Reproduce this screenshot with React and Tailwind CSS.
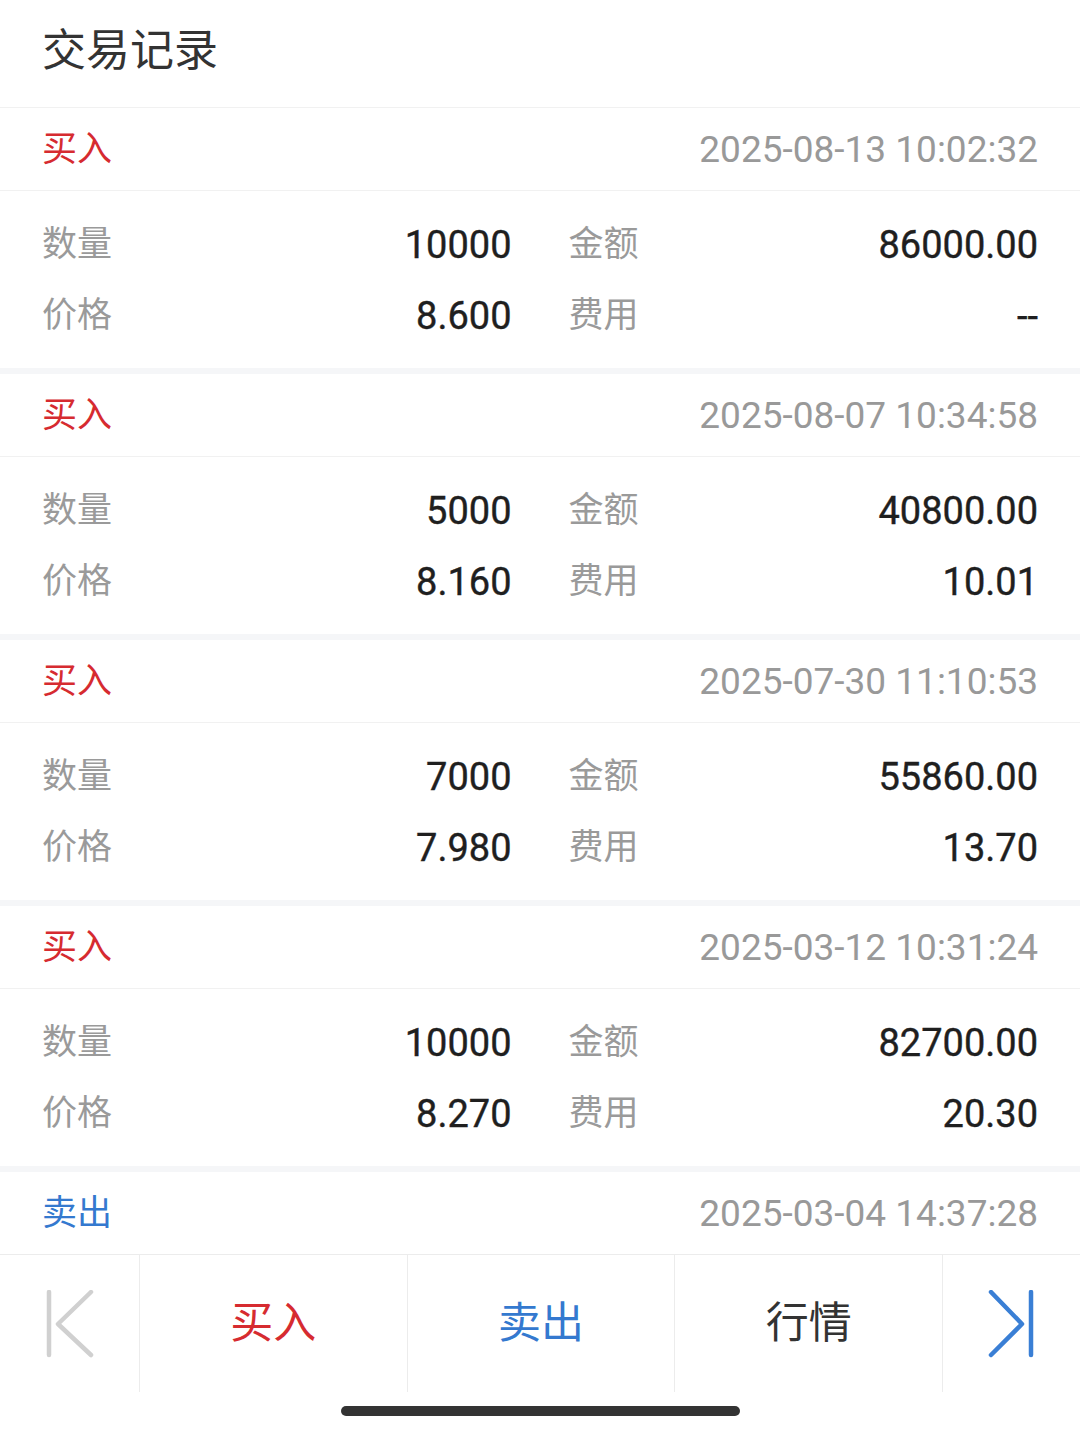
import React from 'react';

const records = [
  { side: 'buy', time: '2025-08-13 10:02:32', qty: '10000', amount: '86000.00', price: '8.600', fee: '--' },
  { side: 'buy', time: '2025-08-07 10:34:58', qty: '5000', amount: '40800.00', price: '8.160', fee: '10.01' },
  { side: 'buy', time: '2025-07-30 11:10:53', qty: '7000', amount: '55860.00', price: '7.980', fee: '13.70' },
  { side: 'buy', time: '2025-03-12 10:31:24', qty: '10000', amount: '82700.00', price: '8.270', fee: '20.30' },
  // last one is cut off by the bottom bar, only its header shows
  { side: 'sell', time: '2025-03-04 14:37:28', headerOnly: true },
];

const Cell = ({ label, value }) => (
  <div className="flex h-[71px] items-center justify-between">
    <span className="text-[35px] leading-none text-[#9a9a9a]">{label}</span>
    <span className="text-[38px] leading-none text-[#1f1f1f] [-webkit-text-stroke:0.4px_#1f1f1f]">{value}</span>
  </div>
);

const RecordItem = ({ record }) => {
  const isBuy = record.side === 'buy';
  return (
    <div>
      <div className="flex h-[83px] items-center justify-between border-b border-[#f1f1f1] px-[42px]">
        <span className={`text-[35px] leading-none ${isBuy ? 'text-[#d62b30]' : 'text-[#3479cf]'}`}>
          {isBuy ? '买入' : '卖出'}
        </span>
        <span className="text-[37px] leading-none text-[#999999]">{record.time}</span>
      </div>
      {!record.headerOnly && (
        <>
          <div className="grid grid-cols-2 gap-x-[57px] px-[42px] pt-[18px] pb-[17px]">
            <Cell label="数量" value={record.qty} />
            <Cell label="金额" value={record.amount} />
            <Cell label="价格" value={record.price} />
            <Cell label="费用" value={record.fee} />
          </div>
          <div className="h-[6px] bg-[#f5f6f8]" />
        </>
      )}
    </div>
  );
};

const App = () => {
  return (
    <div className="flex h-[1436px] w-[1080px] flex-col overflow-hidden bg-white font-[Roboto,'Noto_Sans_CJK_SC',sans-serif]">
      {/* title */}
      <div className="flex h-[108px] shrink-0 items-center border-b border-[#f1f1f1] px-[42px] pb-[6px]">
        <h1 className="text-[44px] leading-none text-[#333333]">交易记录</h1>
      </div>

      {/* list */}
      <div className="min-h-0 flex-1 overflow-hidden">
        {records.map((r, i) => (
          <RecordItem key={i} record={r} />
        ))}
      </div>

      {/* bottom bar */}
      <div className="grid h-[138px] shrink-0 grid-cols-[139px_1fr_1fr_1fr_138px] border-t border-[#ececec]">
        <div className="flex items-center justify-center">
          <svg width="48" height="68" viewBox="0 0 48 68" fill="none" stroke="#d0d0d0" strokeWidth="4.5" strokeLinecap="round" strokeLinejoin="round">
            <line x1="3" y1="2" x2="3" y2="65" />
            <polyline points="45,2 12,34 45,65" />
          </svg>
        </div>
        <div className="flex items-center justify-center border-l border-[#ececec]">
          <span className="text-[43px] leading-[1.2] text-[#d62b30]">买入</span>
        </div>
        <div className="flex items-center justify-center border-l border-[#ececec]">
          <span className="text-[43px] leading-[1.2] text-[#3479cf]">卖出</span>
        </div>
        <div className="flex items-center justify-center border-l border-[#ececec]">
          <span className="text-[43px] leading-[1.2] text-[#333333]">行情</span>
        </div>
        <div className="flex items-center justify-center border-l border-[#ececec]">
          <svg width="46" height="68" viewBox="0 0 46 68" fill="none" stroke="#3a7fd5" strokeWidth="4.5" strokeLinecap="round" strokeLinejoin="round">
            <polyline points="3,2 34,34 3,65" />
            <line x1="43" y1="2" x2="43" y2="65" />
          </svg>
        </div>
      </div>

      {/* home indicator */}
      <div className="flex h-[44px] shrink-0 justify-center pt-[14px]">
        <div className="h-[10px] w-[399px] rounded-full bg-[#333333]" />
      </div>
    </div>
  );
};

export default App;
